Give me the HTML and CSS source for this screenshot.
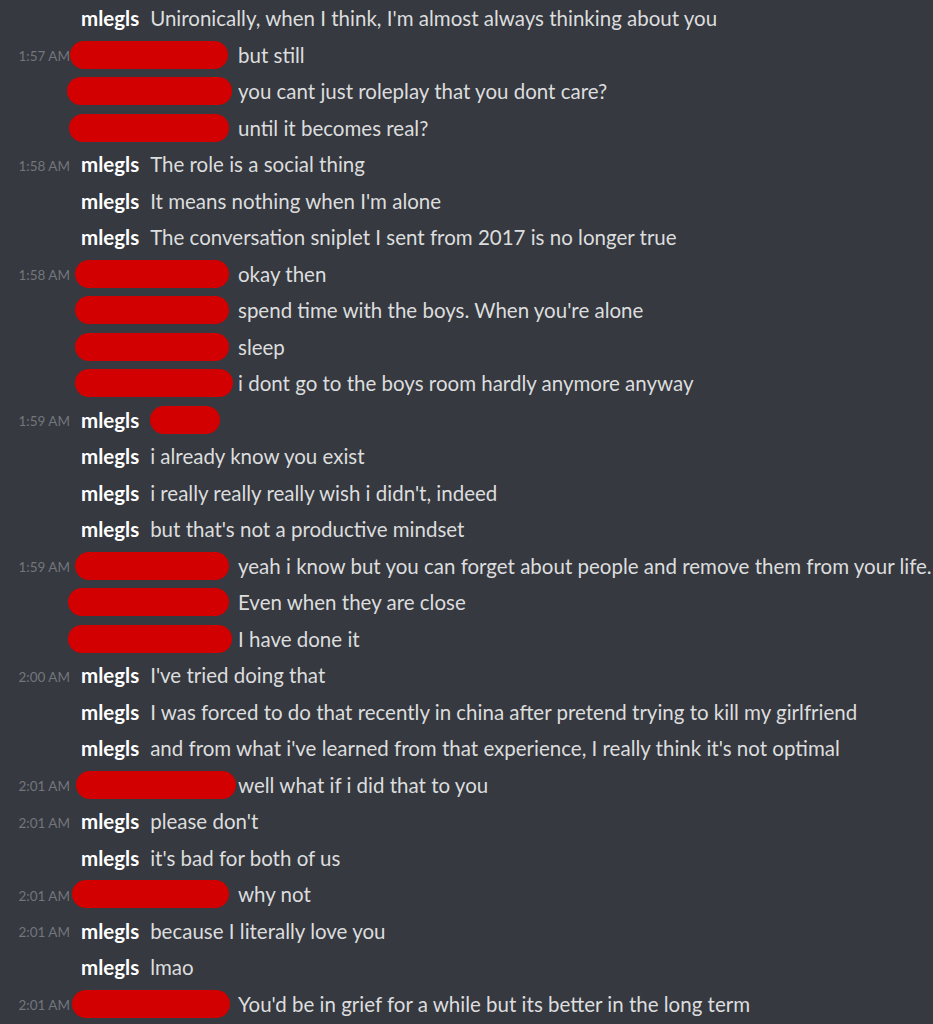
FILE: index.html
```html
<!DOCTYPE html>
<html lang="en">

<head>
    <meta charset="UTF-8">
    <meta name="viewport" content="width=device-width, initial-scale=1.0">
    <title>chat log</title>
    <link rel="stylesheet" href="styles.css">
</head>

<body>

    <div class="chat">

        <div class="row">
            <span class="time"></span>
            <span class="name">mlegls</span>
            <span class="text">Unironically, when I think, I'm almost always thinking about you</span>
        </div>

        <div class="row">
            <span class="time">1:57 AM</span>
            <span class="slot"><span class="blob b1"></span></span>
            <span class="text">but still</span>
        </div>
        <div class="row">
            <span class="time"></span>
            <span class="slot"><span class="blob b2"></span></span>
            <span class="text">you cant just roleplay that you dont care?</span>
        </div>
        <div class="row">
            <span class="time"></span>
            <span class="slot"><span class="blob b3"></span></span>
            <span class="text">until it becomes real?</span>
        </div>

        <div class="row">
            <span class="time">1:58 AM</span>
            <span class="name">mlegls</span>
            <span class="text">The role is a social thing</span>
        </div>
        <div class="row">
            <span class="time"></span>
            <span class="name">mlegls</span>
            <span class="text">It means nothing when I'm alone</span>
        </div>
        <div class="row">
            <span class="time"></span>
            <span class="name">mlegls</span>
            <span class="text">The conversation sniplet I sent from 2017 is no longer true</span>
        </div>

        <div class="row">
            <span class="time">1:58 AM</span>
            <span class="slot"><span class="blob b4"></span></span>
            <span class="text">okay then</span>
        </div>
        <div class="row">
            <span class="time"></span>
            <span class="slot"><span class="blob b4"></span></span>
            <span class="text">spend time with the boys. When you're alone</span>
        </div>
        <div class="row">
            <span class="time"></span>
            <span class="slot"><span class="blob b4"></span></span>
            <span class="text">sleep</span>
        </div>
        <div class="row">
            <span class="time"></span>
            <span class="slot"><span class="blob b5"></span></span>
            <span class="text">i dont go to the boys room hardly anymore anyway</span>
        </div>

        <div class="row">
            <span class="time">1:59 AM</span>
            <span class="name">mlegls</span>
            <span class="blob small"></span>
        </div>
        <div class="row">
            <span class="time"></span>
            <span class="name">mlegls</span>
            <span class="text">i already know you exist</span>
        </div>
        <div class="row">
            <span class="time"></span>
            <span class="name">mlegls</span>
            <span class="text">i really really really wish i didn't, indeed</span>
        </div>
        <div class="row">
            <span class="time"></span>
            <span class="name">mlegls</span>
            <span class="text">but that's not a productive mindset</span>
        </div>

        <div class="row">
            <span class="time">1:59 AM</span>
            <span class="slot"><span class="blob b4"></span></span>
            <span class="text">yeah i know but you can forget about people and remove them from your life.</span>
        </div>
        <div class="row">
            <span class="time"></span>
            <span class="slot"><span class="blob b7"></span></span>
            <span class="text">Even when they are close</span>
        </div>
        <div class="row">
            <span class="time"></span>
            <span class="slot"><span class="blob b8"></span></span>
            <span class="text">I have done it</span>
        </div>

        <div class="row">
            <span class="time">2:00 AM</span>
            <span class="name">mlegls</span>
            <span class="text">I've tried doing that</span>
        </div>
        <div class="row">
            <span class="time"></span>
            <span class="name">mlegls</span>
            <span class="text">I was forced to do that recently in china after pretend trying to kill my girlfriend</span>
        </div>
        <div class="row">
            <span class="time"></span>
            <span class="name">mlegls</span>
            <span class="text">and from what i've learned from that experience, I really think it's not optimal</span>
        </div>

        <div class="row">
            <span class="time">2:01 AM</span>
            <span class="slot"><span class="blob b6"></span></span>
            <span class="text">well what if i did that to you</span>
        </div>

        <div class="row">
            <span class="time">2:01 AM</span>
            <span class="name">mlegls</span>
            <span class="text">please don't</span>
        </div>
        <div class="row">
            <span class="time"></span>
            <span class="name">mlegls</span>
            <span class="text">it's bad for both of us</span>
        </div>

        <div class="row">
            <span class="time">2:01 AM</span>
            <span class="slot"><span class="blob b9"></span></span>
            <span class="text">why not</span>
        </div>

        <div class="row">
            <span class="time">2:01 AM</span>
            <span class="name">mlegls</span>
            <span class="text">because I literally love you</span>
        </div>
        <div class="row">
            <span class="time"></span>
            <span class="name">mlegls</span>
            <span class="text">lmao</span>
        </div>

        <div class="row">
            <span class="time">2:01 AM</span>
            <span class="slot"><span class="blob b10"></span></span>
            <span class="text">You'd be in grief for a while but its better in the long term</span>
        </div>

    </div>

</body>

</html>
```

FILE: styles.css
```css
body {
    margin: 0;
    padding: 0;
    background-color: #36393f;
    font-family: Lato, "Noto Sans", sans-serif;
    overflow: hidden;
}

.chat {
    display: flex;
    flex-direction: column;
}

.row {
    display: flex;
    align-items: center;
    height: 36.5px;
    white-space: nowrap;
}

.time {
    width: 70px;
    flex-shrink: 0;
    text-align: right;
    font-size: 13.5px;
    color: #72767d;
    margin-top: 3px;
}

.name {
    margin-left: 11px;
    font-weight: bold;
    font-size: 20.5px;
    color: #ffffff;
}

.text {
    margin-left: 11px;
    font-size: 20.5px;
    color: #dcddde;
}

/* redacted names */
.slot {
    display: flex;
    align-items: center;
    width: 160px;
    flex-shrink: 0;
}

.slot + .text {
    margin-left: 8px;
}

.blob {
    display: inline-block;
    flex-shrink: 0;
    height: 28px;
    background-color: #d20000;
    border-radius: 14px;
}

.b1 { margin-left: 0; width: 158px; }
.b2 { margin-left: -3px; width: 165px; }
.b3 { margin-left: -1px; width: 160px; }
.b4 { margin-left: 5px; width: 154px; }
.b5 { margin-left: 5px; width: 158px; }
.b6 { margin-left: 6px; width: 160px; }
.b7 { margin-left: -2px; width: 161px; }
.b8 { margin-left: -2px; width: 164px; }
.b9 { margin-left: 2px; width: 157px; }
.b10 { margin-left: 2px; width: 158px; }

.small {
    margin-left: 11px;
    width: 70px;
}
```
